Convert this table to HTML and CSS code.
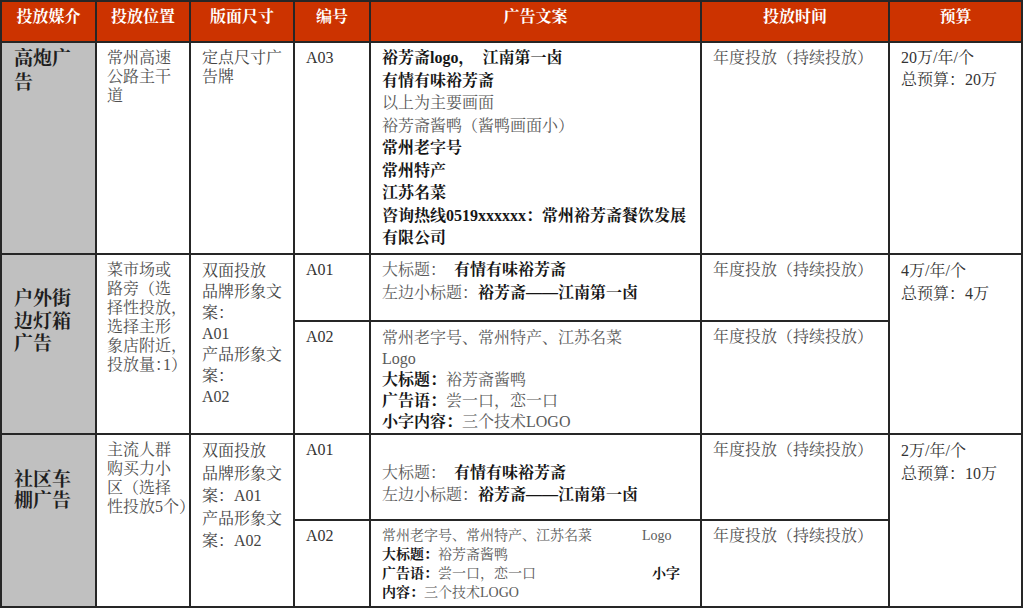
FILE: index.html
```html
<!DOCTYPE html>
<html lang="zh-CN">
<head>
<meta charset="utf-8">
<title>投放计划</title>
<link rel="stylesheet" href="styles.css">
</head>
<body>
<table class="plan">
  <thead>
    <tr class="h-head">
      <th class="c1">投放媒介</th>
      <th class="c2">投放位置</th>
      <th class="c3">版面尺寸</th>
      <th class="c4">编号</th>
      <th class="c5">广告文案</th>
      <th class="c6">投放时间</th>
      <th class="c7">预算</th>
    </tr>
  </thead>
  <tbody>
    <tr class="h-r1">
      <td class="media m1">高炮广<br>告</td>
      <td class="place">常州高速<br>公路主干<br>道</td>
      <td class="size lh19">定点尺寸广<br>告牌</td>
      <td class="code">A03</td>
      <td class="copy lh225 pt4">
        <b>裕芳斋logo，&nbsp;&nbsp;江南第一卤</b><br>
        <b>有情有味裕芳斋</b><br>
        以上为主要画面<br>
        裕芳斋酱鸭（酱鸭画面小）<br>
        <b>常州老字号</b><br>
        <b>常州特产</b><br>
        <b>江苏名菜</b><br>
        <b>咨询热线0519xxxxxx：常州裕芳斋餐饮发展<br>有限公司</b>
      </td>
      <td class="time">年度投放（持续投放）</td>
      <td class="budget">20万/年/个<br>总预算：20万</td>
    </tr>
    <tr class="h-r2a">
      <td class="media m2" rowspan="2">户外街<br>边灯箱<br>广告</td>
      <td class="place" rowspan="2">菜市场或<br>路旁（选<br>择性投放<span class="half">，</span><br>选择主形<br>象店附近<span class="half">，</span><br>投放量<span class="half">：</span>1<span class="half">）</span></td>
      <td class="size lh21" rowspan="2">双面投放<br>品牌形象文<br>案：<br>A01<br>产品形象文<br>案：<br>A02</td>
      <td class="code">A01</td>
      <td class="copy lh23 pt3">大标题：&nbsp;&nbsp;<b>有情有味裕芳斋</b><br>左边小标题：<b>裕芳斋——江南第一卤</b></td>
      <td class="time">年度投放（持续投放）</td>
      <td class="budget lh23" rowspan="2">4万/年/个<br>总预算：4万</td>
    </tr>
    <tr class="h-r2b">
      <td class="code">A02</td>
      <td class="copy lh21 pt5">常州老字号、常州特产、江苏名菜<br>Logo<br><b>大标题：</b>裕芳斋酱鸭<br><b>广告语：</b>尝一口，恋一口<br><b>小字内容：</b>三个技术LOGO</td>
      <td class="time">年度投放（持续投放）</td>
    </tr>
    <tr class="h-r3a">
      <td class="media m3" rowspan="2">社区车<br>棚广告</td>
      <td class="place" rowspan="2">主流人群<br>购买力小<br>区（选择<br>性投放5个<span class="half">）</span></td>
      <td class="size lh225" rowspan="2">双面投放<br>品牌形象文<br>案：A01<br>产品形象文<br>案：A02</td>
      <td class="code">A01</td>
      <td class="copy lh225 pt4">&nbsp;<br>大标题：&nbsp;&nbsp;<b>有情有味裕芳斋</b><br>左边小标题：<b>裕芳斋——江南第一卤</b></td>
      <td class="time">年度投放（持续投放）</td>
      <td class="budget lh23" rowspan="2">2万/年/个<br>总预算：10万</td>
    </tr>
    <tr class="h-r3b">
      <td class="code">A02</td>
      <td class="copy small lh19 pt5">常州老字号、常州特产、江苏名菜<span class="gap-logo">Logo</span><br><b>大标题：</b>裕芳斋酱鸭<br><b>广告语：</b>尝一口，恋一口<b class="gap-small">小字</b><br><b>内容：</b>三个技术LOGO</td>
      <td class="time">年度投放（持续投放）</td>
    </tr>
  </tbody>
</table>
</body>
</html>
```
FILE: styles.css
```css
html, body {
  margin: 0;
  padding: 0;
  background: #ffffff;
}

body {
  font-family: "Liberation Serif", "Noto Serif CJK SC", "Noto Sans CJK SC", serif;
  color: #555555;
}

.plan {
  box-sizing: border-box;
  width: 1023px;
  table-layout: fixed;
  border-collapse: separate;
  border-spacing: 0;
  border-top: 2px solid #262626;
  border-left: 2px solid #262626;
}

.plan th,
.plan td {
  box-sizing: border-box;
  border-right: 2px solid #262626;
  border-bottom: 2px solid #262626;
  padding: 5px 0 0 11px;
  vertical-align: top;
  text-align: left;
  font-size: 16px;
  line-height: 20px;
  font-weight: normal;
  white-space: nowrap;
}

.plan th {
  background: #cc3300;
  color: #ffffff;
  font-weight: bold;
  text-align: center;
  padding: 4px 0 0 0;
  line-height: 21px;
}

.c1 { width: 95px; }
.c2 { width: 94px; }
.c3 { width: 104px; }
.c4 { width: 76px; }
.c5 { width: 331px; }
.c6 { width: 188px; }
.c7 { width: 133px; }

.h-head { height: 41px; }
.h-r1 { height: 212px; }
.h-r2a { height: 67px; }
.h-r2b { height: 113px; }
.h-r3a { height: 86px; }
.h-r3b { height: 87px; }

.plan td.media {
  background: #c0c0c0;
  color: #1e1e1e;
  font-weight: bold;
  font-size: 19px;
  padding-left: 12px;
}

.plan td.m1 { padding-top: 4px; line-height: 24px; }
.plan td.m2 { padding-top: 33px; line-height: 22.5px; }
.plan td.m3 { padding-top: 34px; line-height: 21px; }

.plan td.place {
  line-height: 19px;
  color: #505050;
  padding-left: 10px;
}

.half {
  font-feature-settings: "halt" 1;
}

.plan td.size { color: #444444; }
.plan td.code { color: #333333; }
.plan td.time { color: #505050; }

.plan td.budget {
  color: #333333;
  padding-top: 4px;
  line-height: 22px;
}

.plan td.copy { color: #5a5a5a; }
.plan td.copy b { color: #161616; font-weight: bold; }
.plan td.small { font-size: 14px; }

.plan td.lh19 { line-height: 19px; }
.plan td.lh21 { line-height: 21px; }
.plan td.lh225 { line-height: 22.5px; }
.plan td.lh23 { line-height: 23px; }
.plan td.pt3 { padding-top: 3px; }
.plan td.pt4 { padding-top: 4px; }
.plan td.pt5 { padding-top: 5px; }

.gap-logo { margin-left: 50px; }
.gap-small { margin-left: 116px; }
```
